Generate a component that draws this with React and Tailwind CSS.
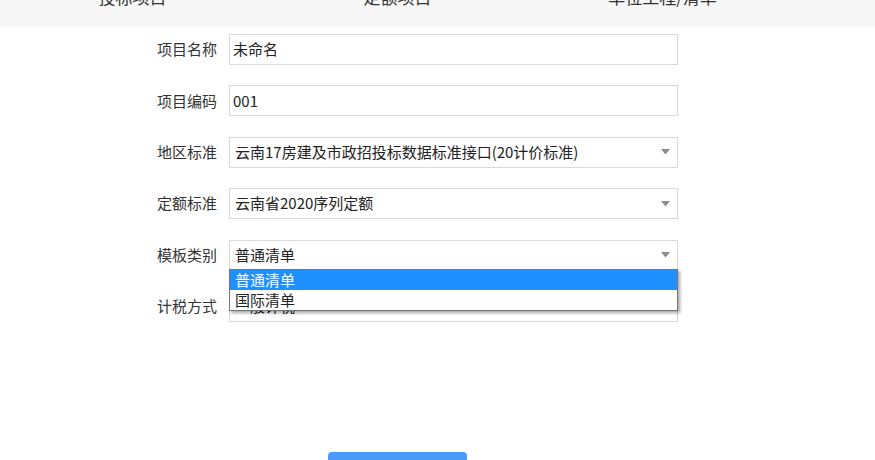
import React from 'react';

const font = { fontFamily: '"Noto Sans CJK SC", "Liberation Sans", sans-serif' };

const Arrow = () => (
  <svg width="9" height="6" viewBox="0 0 9 6" className="absolute right-[7px] top-1/2 -translate-y-1/2">
    <path d="M0 0 H9 L4.5 5.5 Z" fill="#8c8c8c" />
  </svg>
);

const Field = ({ label, children }) => (
  <div className="flex items-center h-[31px]">
    <div className="w-[217px] text-right text-[15px] text-[#333]">{label}</div>
    <div className="ml-[12px] w-[449px] h-full relative">{children}</div>
  </div>
);

const Input = ({ value }) => (
  <div className="h-full border border-[#d9d9d9] bg-white flex items-center pl-[3px] text-[15px] text-[#222]">
    {value}
  </div>
);

const Select = ({ value }) => (
  <div className="h-full border border-[#d9d9d9] bg-white flex items-center pl-[5px] text-[15px] text-[#222] relative">
    <span className="whitespace-nowrap">{value}</span>
    <Arrow />
  </div>
);

export default function App() {
  const tabs = ['投标项目', '定额项目', '单位工程/清单', '工料机汇总表'];

  return (
    <div className="w-[875px] h-[460px] overflow-hidden bg-white relative" style={font}>
      <div className="h-[27px] bg-[#f7f7f7] flex overflow-hidden">
        {tabs.map((t) => (
          <div key={t} className="w-[265px] shrink-0 flex justify-center">
            <span className="text-[17px] leading-none text-[#333] mt-[-12px] whitespace-nowrap">{t}</span>
          </div>
        ))}
      </div>

      <div className="pt-[7px] flex flex-col gap-[20.4px]">
        <Field label="项目名称">
          <Input value="未命名" />
        </Field>
        <Field label="项目编码">
          <Input value="001" />
        </Field>
        <Field label="地区标准">
          <Select value="云南17房建及市政招投标数据标准接口(20计价标准)" />
        </Field>
        <Field label="定额标准">
          <Select value="云南省2020序列定额" />
        </Field>
        <Field label="模板类别">
          <Select value="普通清单" />
          <div className="absolute left-0 top-[29px] w-full z-10 bg-white border border-[#767676] shadow-[2px_2px_3px_rgba(0,0,0,0.35)] text-[15px] leading-[20px]">
            <div className="bg-[#1e90ff] text-white pl-[5px]">普通清单</div>
            <div className="text-[#222] pl-[5px]">国际清单</div>
          </div>
        </Field>
        <Field label="计税方式">
          <Select value="一般计税" />
        </Field>
      </div>

      <div className="absolute left-[328px] top-[452px] w-[139px] h-[36px] bg-[#4a9cfc] rounded-[4px]" />
    </div>
  );
}
